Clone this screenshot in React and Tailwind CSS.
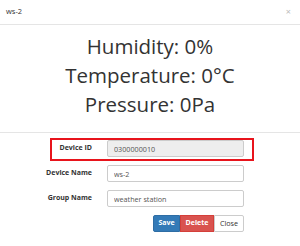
import React from "react";

const Row = ({ label, value, disabled }) => (
  <div className="flex items-center h-[17px]">
    <label className="w-[92px] text-right text-[7px] font-bold text-[#333]">{label}</label>
    <input
      readOnly
      value={value}
      disabled={disabled}
      className={`ml-[15px] w-[137px] h-[17px] px-[6px] text-[7.2px] text-[#555] border border-[#ccc] rounded-[2px] outline-none ${
        disabled ? "bg-[#eee]" : "bg-white"
      }`}
    />
  </div>
);

const App = () => {
  return (
    <div className="w-[300px] h-[246px] bg-white overflow-hidden" style={{ fontFamily: "'Open Sans', sans-serif" }}>
      <div className="flex items-center justify-between h-[25px] px-[6px] border-b border-[#e5e5e5]">
        <span className="text-[7.5px] text-[#333]">ws-2</span>
        <span className="text-[9px] text-[#bbb] mr-[3px]">×</span>
      </div>
      <div className="pt-[7px] pb-[13px] text-center text-[20.5px] leading-[29px] text-[#333] border-b border-[#e5e5e5]">
        <div>Humidity: 0%</div>
        <div>Temperature: 0°C</div>
        <div>Pressure: 0Pa</div>
      </div>
      <div className="pt-[7px] flex flex-col gap-[8px]">
        <div className="relative">
          <div className="absolute left-[50px] top-[-2px] w-[204px] h-[23px] border-2 border-[#e8141c]" />
          <Row label="Device ID" value="0300000010" disabled />
        </div>
        <Row label="Device Name" value="ws-2" />
        <Row label="Group Name" value="weather station" />
        <div className="flex w-[244px] justify-end">
          <button className="h-[17px] w-[27px] bg-[#337ab7] border border-[#2e6da4] text-white text-[7px] font-bold rounded-l-[2px]">Save</button>
          <button className="h-[17px] w-[34px] bg-[#d9534f] border border-[#d43f3a] text-white text-[7px] font-bold">Delete</button>
          <button className="h-[17px] w-[30px] bg-white border border-[#ccc] text-[#333] text-[7.2px] rounded-r-[2px]">Close</button>
        </div>
      </div>
    </div>
  );
};

export default App;
